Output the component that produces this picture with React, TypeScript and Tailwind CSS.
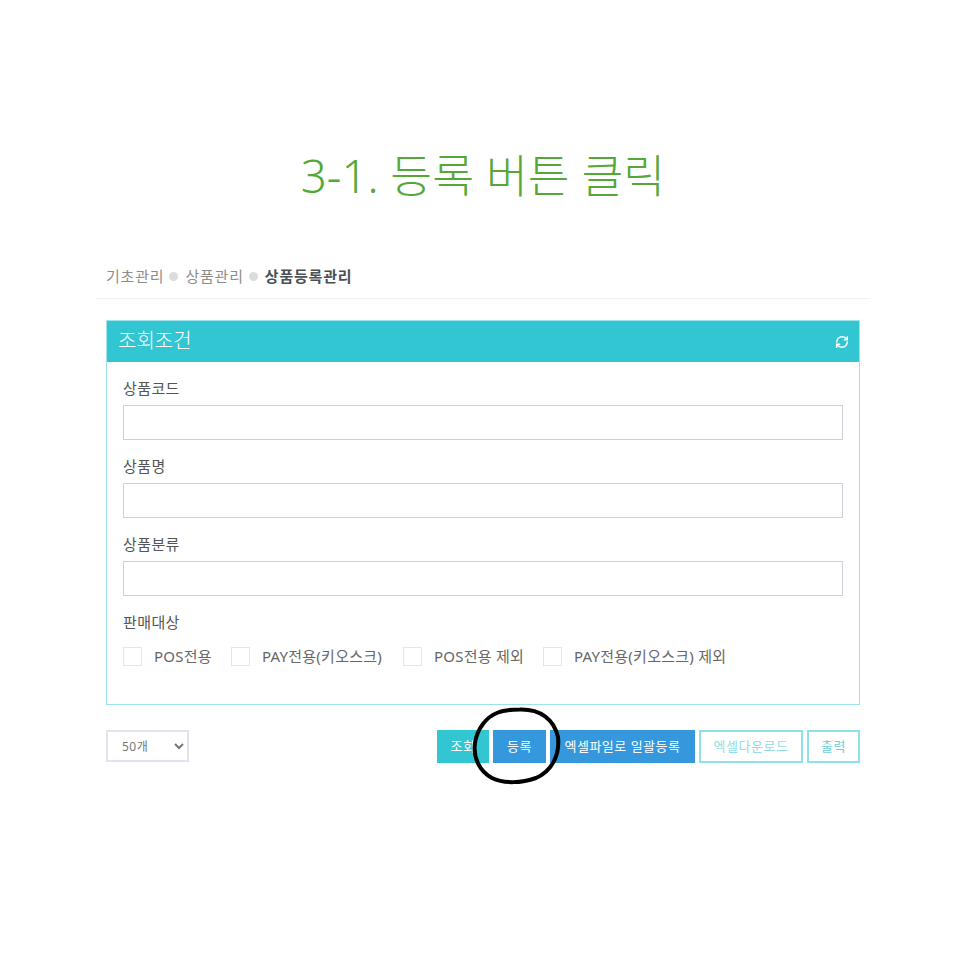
import { RefreshCw } from "lucide-react";

const kr = `font-['Noto_Sans','Noto_Sans_CJK_KR',sans-serif]`;

function Field({ label }: { label: string }) {
  return (
    <div className="flex flex-col">
      <label className="h-[17px] mb-[8px] text-[15px] tracking-[0.4px] leading-[17px] text-[#555]">{label}</label>
      <input className="h-[35px] w-full border border-[#ccd0de] bg-white" />
    </div>
  );
}

function Check({ label, width }: { label: string; width: string }) {
  return (
    <div className={`flex items-center ${width}`}>
      <span className="w-[19px] h-[19px] border border-[#e4e6ea] bg-white shrink-0" />
      <span className="ml-[12px] text-[15px] tracking-[0.25px] leading-[19px] text-[#666] whitespace-nowrap">{label}</span>
    </div>
  );
}

export default function App() {
  return (
    <div className={`relative w-[966px] h-[966px] bg-white overflow-hidden ${kr}`}>
      <h1 className="pt-[140px] h-[258px] text-center text-[45.5px] leading-[70px] font-light text-[#55a838]">
        3-1. 등록 버튼 클릭
      </h1>

      <div className="mx-[96px] w-[774px] h-[41px] pt-[8px] px-[10px] flex items-start border-b border-[#f0f2f6] text-[15px] tracking-[0.8px] leading-[20px]">
        <span className="text-[#8d8d8d]">기초관리</span>
        <span className="ml-[5px] mr-[7px] mt-[6px] w-[9px] h-[9px] rounded-full bg-[#dcdcdc]" />
        <span className="text-[#8d8d8d]">상품관리</span>
        <span className="ml-[5px] mr-[7px] mt-[6px] w-[9px] h-[9px] rounded-full bg-[#dcdcdc]" />
        <span className="font-bold text-[#4a4f57]">상품등록관리</span>
      </div>

      <div className="mt-[21px] mx-[106px] w-[754px] h-[385px] border border-[#9fe3ea] bg-white">
        <div className="h-[41px] bg-[#32c5d2] flex items-center justify-between pl-[11px] pr-[10px]">
          <span className="text-[20px] leading-[24px] -mt-[2px] text-white font-light">조회조건</span>
          <RefreshCw className="w-[14px] h-[14px] text-white" strokeWidth={2.5} />
        </div>
        <div className="px-[16px] pt-[18px] flex flex-col gap-[18px]">
          <Field label="상품코드" />
          <Field label="상품명" />
          <Field label="상품분류" />
          <div>
            <div className="h-[17px] mb-[16px] text-[15px] tracking-[0.4px] leading-[17px] text-[#555]">판매대상</div>
            <div className="flex items-center">
              <Check label="POS전용" width="w-[108px]" />
              <Check label="PAY전용(키오스크)" width="w-[172px]" />
              <Check label="POS전용 제외" width="w-[140px]" />
              <Check label="PAY전용(키오스크) 제외" width="w-[200px]" />
            </div>
          </div>
        </div>
      </div>

      <div className="mt-[25px] mx-[106px] w-[754px] h-[33px] flex items-start justify-between text-[13px] tracking-[0.5px]">
        <select className="w-[83px] h-[32px] pl-[10px] border-2 border-[#e0e4ee] bg-white text-[#777] text-[12px]">
          <option>50개</option>
        </select>
        <div className="flex gap-[4px] h-[33px]">
          <button className="w-[52px] bg-[#32c5d2] text-white">조회</button>
          <button className="w-[53px] bg-[#3598dc] text-white">등록</button>
          <button className="w-[145px] bg-[#3598dc] text-white">엑셀파일로 일괄등록</button>
          <button className="w-[104px] border-2 border-[#8fe0e7] text-[#8fdde4] bg-white">엑셀다운로드</button>
          <button className="w-[53px] border-2 border-[#8fe0e7] text-[#6cd0da] bg-white">출력</button>
        </div>
      </div>

      {/* hand drawn circle over the button */}
      <svg className="absolute left-[470px] top-[705px]" width="94" height="82" viewBox="0 0 94 82" fill="none">
        <path
          d="M50 4.5C70 4 84 14 88 32C90 50 82 66 66 73C52 78 34 79 22 73C9 66 3 52 5 38C7 24 16 12 28 7.5C34 5 42 4.5 50 4.5Z"
          stroke="#000"
          strokeWidth="4"
        />
      </svg>
    </div>
  );
}
